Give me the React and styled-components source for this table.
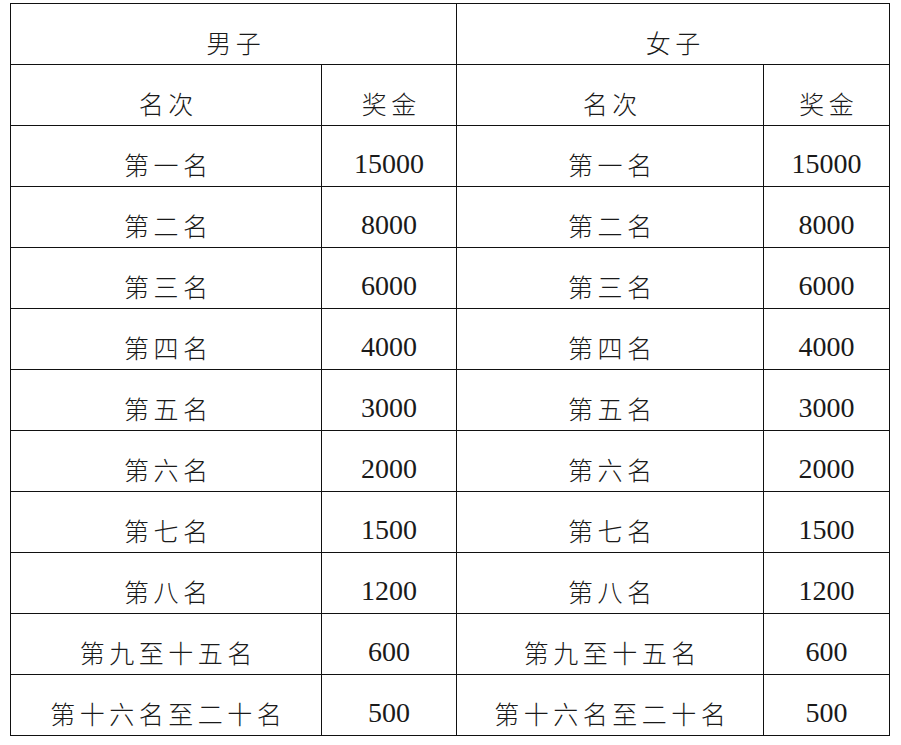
import React from 'react';
import styled, { createGlobalStyle } from 'styled-components';

const GlobalStyle = createGlobalStyle`
  html, body {
    margin: 0;
    padding: 0;
    background: #ffffff;
  }
`;

const prizes = [
  ['第一名', '15000'],
  ['第二名', '8000'],
  ['第三名', '6000'],
  ['第四名', '4000'],
  ['第五名', '3000'],
  ['第六名', '2000'],
  ['第七名', '1500'],
  ['第八名', '1200'],
  ['第九至十五名', '600'],
  ['第十六名至二十名', '500'],
];

const App = () => (
  <Page>
    <GlobalStyle />
    <Table>
      <colgroup>
        <col style={{ width: 311 }} />
        <col style={{ width: 135 }} />
        <col style={{ width: 307 }} />
        <col style={{ width: 126 }} />
      </colgroup>
      <tbody>
        <tr>
          <Cell colSpan={2}><Cjk>男子</Cjk></Cell>
          <Cell colSpan={2}><Cjk>女子</Cjk></Cell>
        </tr>
        <tr>
          <Cell><Cjk>名次</Cjk></Cell>
          <Cell><Cjk>奖金</Cjk></Cell>
          <Cell><Cjk>名次</Cjk></Cell>
          <Cell><Cjk>奖金</Cjk></Cell>
        </tr>
        {prizes.map(([rank, amount]) => (
          <tr key={rank}>
            <Cell><Cjk>{rank}</Cjk></Cell>
            <Cell><Num>{amount}</Num></Cell>
            <Cell><Cjk>{rank}</Cjk></Cell>
            <Cell><Num>{amount}</Num></Cell>
          </tr>
        ))}
      </tbody>
    </Table>
  </Page>
);

const Page = styled.div`
  padding: 3px 0 0 10px;
  width: 901px;
  height: 745px;
  box-sizing: border-box;
`;

const Table = styled.table`
  border-collapse: collapse;
  table-layout: fixed;
  width: 880px;
`;

const Cell = styled.td`
  border: 1.5px solid #111;
  height: 61px;
  padding: 16px 0 0;
  box-sizing: border-box;
  text-align: center;
  vertical-align: middle;
  color: #1a1a1a;
  white-space: nowrap;
`;

const Cjk = styled.span`
  font-family: "Noto Sans CJK SC", sans-serif;
  font-weight: 300;
  font-size: 25px;
  letter-spacing: 4.5px;
  margin-right: -4.5px;
`;

const Num = styled.span`
  font-family: "Liberation Serif", serif;
  font-size: 28px;
`;

export default App;
